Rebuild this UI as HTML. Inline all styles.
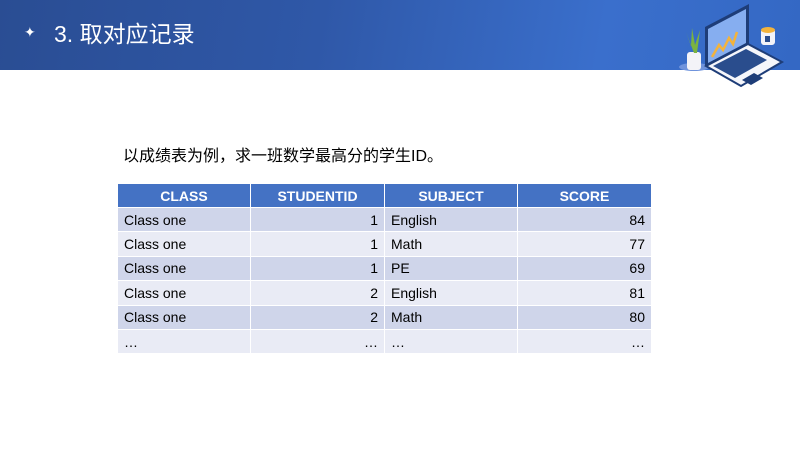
<!DOCTYPE html>
<html><head><meta charset="utf-8"><style>
body{margin:0;width:800px;height:450px;background:#fff;position:relative;overflow:hidden;font-family:"Liberation Sans","Noto Sans CJK SC",sans-serif}
.hdr{position:absolute;left:0;top:0;width:800px;height:70px;background:linear-gradient(100deg,#2a4d93 0%,#2f58a8 40%,#3a6fcc 75%,#3468c4 100%)}
.title{position:absolute;left:54px;top:19px;color:#fff;font-size:23px;line-height:30px}
.star{position:absolute;left:24px;top:24px;color:#fff;font-size:14px}
.txt{position:absolute;left:123px;top:142px;font-size:16px;color:#000}
table{position:absolute;left:117px;top:183px;border-collapse:collapse;font-size:14px}
td,th{border:1px solid #fff;padding:0 6px;height:24.4px;box-sizing:border-box}
th{background:#4472c4;color:#fff;font-weight:bold;font-size:14px;height:24px}
tr.a td{background:#cfd5ea}tr.b td{background:#e9ebf5}
.r{text-align:right}
</style></head><body>
<div class="hdr"></div>
<div class="star">✦</div>
<div class="title">3. 取对应记录</div>
<svg style="position:absolute;left:0;top:0" width="800" height="95" viewBox="0 0 800 95">
<ellipse cx="694" cy="67" rx="15" ry="4" fill="#6f93dc"/>
<rect x="687" y="52" width="14" height="18" rx="3" fill="#f3f3f8"/>
<path d="M694 53 L686 32 L691 46 L692 28 L695 45 L700 30 L697 53 Z" fill="#7bb33f"/>
<path d="M705 66 L705 27 L749 4 L749 44 Z" fill="#1e3d78"/>
<path d="M708 63 L708 29 L746 9 L746 43 Z" fill="#86aef0"/>
<path d="M712 57 L719 45 L723 50 L729 38 L733 44 L737 32" stroke="#f3b33c" stroke-width="2.5" fill="none"/>
<path d="M706 66 L741 86 L782 62 L748 44 Z" fill="#f5f6fb" stroke="#1e3d78" stroke-width="2"/>
<path d="M713 66 L735 78 L767 60 L746 49 Z" fill="#2a4d8d"/>
<path d="M742 80 L751 85 L763 78 L754 73 Z" fill="#1e3d78"/>
<rect x="761" y="29" width="14" height="16" rx="3" fill="#f3f3f8"/>
<ellipse cx="768" cy="30" rx="7" ry="3" fill="#f3b33c"/>
<rect x="765" y="36" width="5" height="6" fill="#2a4d8d"/>
</svg>
<div class="txt">以成绩表为例，求一班数学最高分的学生ID。</div>
<table>
<tr><th style="width:133px">CLASS</th><th style="width:134px">STUDENTID</th><th style="width:133px">SUBJECT</th><th style="width:134px">SCORE</th></tr>
<tr class="a"><td>Class one</td><td class="r">1</td><td>English</td><td class="r">84</td></tr>
<tr class="b"><td>Class one</td><td class="r">1</td><td>Math</td><td class="r">77</td></tr>
<tr class="a"><td>Class one</td><td class="r">1</td><td>PE</td><td class="r">69</td></tr>
<tr class="b"><td>Class one</td><td class="r">2</td><td>English</td><td class="r">81</td></tr>
<tr class="a"><td>Class one</td><td class="r">2</td><td>Math</td><td class="r">80</td></tr>
<tr class="b"><td>…</td><td class="r">…</td><td>…</td><td class="r">…</td></tr>
</table>
</body></html>
